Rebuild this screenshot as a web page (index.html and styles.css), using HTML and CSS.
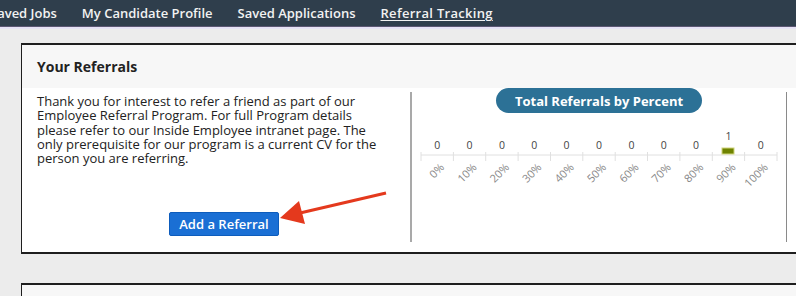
FILE: index.html
```html
<!DOCTYPE html>
<html lang="en">
<head>
<meta charset="utf-8">
<title>Referral Tracking</title>
<link rel="stylesheet" href="styles.css">
</head>
<body>
<nav class="topnav">
  <ul class="topnav-list">
    <li class="topnav-item">Saved Jobs</li>
    <li class="topnav-item">My Candidate Profile</li>
    <li class="topnav-item">Saved Applications</li>
    <li class="topnav-item topnav-item--active">Referral Tracking</li>
  </ul>
</nav>
<main class="page">
  <section class="card">
    <header class="card-header">Your Referrals</header>
    <div class="card-body">
      <div class="intro">
        <p class="intro-text">Thank you for interest to refer a friend as part of our Employee Referral Program. For full Program details please refer to our Inside Employee intranet page. The only prerequisite for our program is a current CV for the person you are referring.</p>
        <button class="btn-primary" type="button">Add a Referral</button>
      </div>
      <div class="chart">
        <div class="chart-title">Total Referrals by Percent</div>
        <svg class="chart-svg" width="374" height="90" viewBox="0 0 374 90">
          <g class="grid">
            <line x1="9" y1="42" x2="365" y2="42"/>
            <line x1="9" y1="39" x2="9" y2="48"/>
            <line x1="41.4" y1="39" x2="41.4" y2="48"/>
            <line x1="73.7" y1="39" x2="73.7" y2="48"/>
            <line x1="106.1" y1="39" x2="106.1" y2="48"/>
            <line x1="138.5" y1="39" x2="138.5" y2="48"/>
            <line x1="170.8" y1="39" x2="170.8" y2="48"/>
            <line x1="203.2" y1="39" x2="203.2" y2="48"/>
            <line x1="235.5" y1="39" x2="235.5" y2="48"/>
            <line x1="267.9" y1="39" x2="267.9" y2="48"/>
            <line x1="300.3" y1="39" x2="300.3" y2="48"/>
            <line x1="332.6" y1="39" x2="332.6" y2="48"/>
            <line x1="365" y1="39" x2="365" y2="48"/>
          </g>
          <rect class="bar" x="310" y="35" width="12" height="6"/>
          <g class="values">
            <text x="25.2" y="35.5">0</text>
            <text x="57.5" y="35.5">0</text>
            <text x="89.9" y="35.5">0</text>
            <text x="122.3" y="35.5">0</text>
            <text x="154.6" y="35.5">0</text>
            <text x="187" y="35.5">0</text>
            <text x="219.4" y="35.5">0</text>
            <text x="251.7" y="35.5">0</text>
            <text x="284.1" y="35.5">0</text>
            <text x="316.4" y="26.5">1</text>
            <text x="348.8" y="35.5">0</text>
          </g>
          <g class="labels">
            <text transform="translate(33,55) rotate(-45)">0%</text>
            <text transform="translate(65.5,55) rotate(-45)">10%</text>
            <text transform="translate(97.9,55) rotate(-45)">20%</text>
            <text transform="translate(130.3,55) rotate(-45)">30%</text>
            <text transform="translate(162.6,55) rotate(-45)">40%</text>
            <text transform="translate(195,55) rotate(-45)">50%</text>
            <text transform="translate(227.4,55) rotate(-45)">60%</text>
            <text transform="translate(259.7,55) rotate(-45)">70%</text>
            <text transform="translate(292.1,55) rotate(-45)">80%</text>
            <text transform="translate(324.4,55) rotate(-45)">90%</text>
            <text transform="translate(356.8,55) rotate(-45)">100%</text>
          </g>
        </svg>
      </div>
      <svg class="arrow" width="120" height="40" viewBox="0 0 120 40">
        <line x1="108" y1="3" x2="22" y2="23" />
        <polygon points="2,28 21,11 27,34" />
      </svg>
    </div>
  </section>
  <section class="card card--second">
    <header class="card-header"></header>
  </section>
</main>
</body>
</html>
```

FILE: styles.css
```css
html, body {
  margin: 0;
  padding: 0;
}
body {
  background: #ececec;
  font-family: "Open Sans", "Noto Sans", sans-serif;
  color: #222;
  width: 796px;
  height: 296px;
  overflow: hidden;
}
.topnav {
  background: #2f3e4c;
  height: 26px;
  border-bottom: 1px solid #5b5773;
  box-shadow: 0 2px 0 #e6e2f5;
}
.topnav-list {
  list-style: none;
  margin: 0 0 0 -10px;
  padding: 0;
  display: flex;
  gap: 25px;
  height: 26px;
  align-items: center;
}
.topnav-item {
  color: #f2f2f2;
  font-size: 13px;
  font-weight: 600;
  white-space: nowrap;
}
.topnav-item--active {
  text-decoration: underline;
  text-underline-offset: 2px;
  letter-spacing: 0.3px;
}
.page {
  padding: 16px 0 0 21px;
}
.card {
  width: 800px;
  border-top: 2px solid #1e1e1e;
  border-left: 1px solid #1e1e1e;
  border-bottom: 2px solid #1e1e1e;
  background: #fff;
}
.card--second {
  margin-top: 29px;
  border-bottom: none;
  height: 40px;
  background: #f6f6f6;
}
.card-header {
  background: #f7f7f7;
  height: 43px;
  display: flex;
  align-items: center;
  padding-left: 15px;
  font-size: 14px;
  font-weight: 700;
  color: #222;
}
.card-body {
  position: relative;
  display: flex;
  padding: 4px 0 10px 0;
}
.intro {
  width: 358px;
  padding: 2px 15px 0 15px;
  height: 148px;
}
.intro-text {
  margin: 0;
  width: 342px;
  font-size: 13px;
  line-height: 14.3px;
  color: #222;
}
.btn-primary {
  margin: 47px 0 0 132px;
  height: 24px;
  width: 110px;
  padding: 0;
  background: #1a6fd4;
  border: 1px solid #0d5cbc;
  border-radius: 2px;
  color: #fff;
  font-family: "Open Sans", sans-serif;
  font-size: 13px;
  font-weight: 600;
}
.chart {
  width: 374px;
  height: 150px;
  border-left: 2px solid #a9a9a9;
  border-right: 1px solid #8a8a8a;
  display: flex;
  flex-direction: column;
  align-items: center;
}
.chart-title {
  margin-top: -4px;
  height: 25px;
  width: 206px;
  border-radius: 13px;
  background: #2c7196;
  color: #fff;
  font-size: 13px;
  font-weight: 700;
  display: flex;
  align-items: center;
  justify-content: center;
}
.chart-svg {
  display: block;
}
.grid line {
  stroke: #e0e0e0;
  stroke-width: 1;
}
.bar {
  fill: #6f8300;
  stroke: #cfd47a;
  stroke-width: 1;
}
.values text {
  font-family: "Open Sans", sans-serif;
  font-size: 10.5px;
  fill: #444;
  text-anchor: middle;
}
.labels text {
  font-family: "Open Sans", sans-serif;
  font-size: 11px;
  fill: #888;
  text-anchor: end;
}
.arrow {
  position: absolute;
  left: 256px;
  top: 102px;
}
.arrow line {
  stroke: #e4391d;
  stroke-width: 3;
}
.arrow polygon {
  fill: #e4391d;
}
```
